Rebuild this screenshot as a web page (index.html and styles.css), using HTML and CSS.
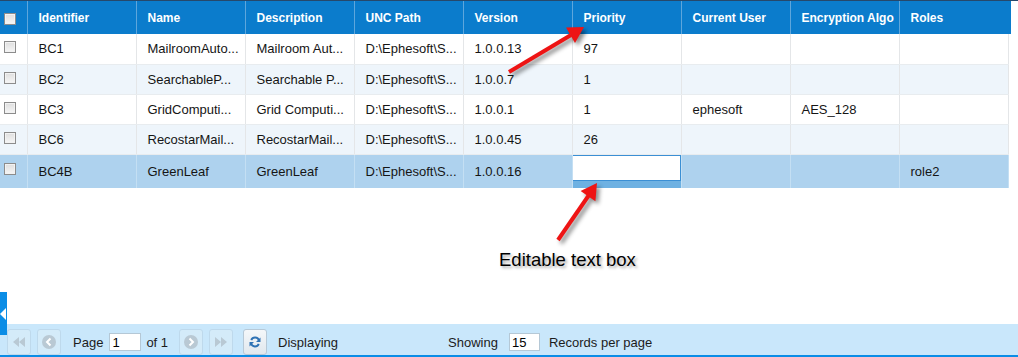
FILE: index.html
```
<!DOCTYPE html>
<html lang="en">

<head>
    <meta charset="UTF-8">
    <title>Batch Class Management</title>
    <link rel="stylesheet" href="styles.css">
</head>

<body>
    <div class="page">
        <div class="top-line"></div>

        <!-- Grid header -->
        <div class="grid-head">
            <table class="grid">
                <colgroup>
                    <col class="col-check"><col><col><col><col><col><col><col><col><col>
                </colgroup>
                <tr>
                    <th class="check-cell"><span class="checkbox"></span></th>
                    <th>Identifier</th>
                    <th>Name</th>
                    <th>Description</th>
                    <th>UNC Path</th>
                    <th>Version</th>
                    <th>Priority</th>
                    <th>Current User</th>
                    <th>Encryption Algo</th>
                    <th>Roles</th>
                </tr>
            </table>
        </div>

        <table class="grid grid-body">
            <colgroup>
                <col class="col-check"><col><col><col><col><col><col><col><col><col>
            </colgroup>
            <tr>
                <td class="check-cell"><span class="checkbox"></span></td>
                <td>BC1</td>
                <td>MailroomAuto...</td>
                <td>Mailroom Aut...</td>
                <td>D:\Ephesoft\S...</td>
                <td>1.0.0.13</td>
                <td>97</td>
                <td></td>
                <td></td>
                <td></td>
            </tr>
            <tr class="alt">
                <td class="check-cell"><span class="checkbox"></span></td>
                <td>BC2</td>
                <td>SearchableP...</td>
                <td>Searchable P...</td>
                <td>D:\Ephesoft\S...</td>
                <td>1.0.0.7</td>
                <td>1</td>
                <td></td>
                <td></td>
                <td></td>
            </tr>
            <tr>
                <td class="check-cell"><span class="checkbox"></span></td>
                <td>BC3</td>
                <td>GridComputi...</td>
                <td>Grid Computi...</td>
                <td>D:\Ephesoft\S...</td>
                <td>1.0.0.1</td>
                <td>1</td>
                <td>ephesoft</td>
                <td>AES_128</td>
                <td></td>
            </tr>
            <tr class="alt">
                <td class="check-cell"><span class="checkbox"></span></td>
                <td>BC6</td>
                <td>RecostarMail...</td>
                <td>RecostarMail...</td>
                <td>D:\Ephesoft\S...</td>
                <td>1.0.0.45</td>
                <td>26</td>
                <td></td>
                <td></td>
                <td></td>
            </tr>
            <tr class="selected">
                <td class="check-cell"><span class="checkbox"></span></td>
                <td>BC4B</td>
                <td>GreenLeaf</td>
                <td>GreenLeaf</td>
                <td>D:\Ephesoft\S...</td>
                <td>1.0.0.16</td>
                <td class="edit-cell"><input type="text" class="cell-editor"></td>
                <td></td>
                <td></td>
                <td>role2</td>
            </tr>
        </table>

        <div class="spacer"></div>

        <!-- Pager -->
        <div class="pager">
            <button class="pager-btn first" disabled>
                <svg width="12" height="10" viewBox="0 0 12 10"><path d="M6 0 L0 5 L6 10 Z M12 0 L6 5 L12 10 Z" fill="#b9c9d4"/></svg>
            </button>
            <button class="pager-btn prev" disabled>
                <svg width="14" height="14" viewBox="0 0 14 14"><circle cx="7" cy="7" r="7" fill="#b9c9d4"/><path d="M8.5 3.5 L5 7 L8.5 10.5" stroke="#fff" stroke-width="2" fill="none"/></svg>
            </button>
            <span class="pager-label page-label">Page</span>
            <input type="text" class="pager-input page-input" value="1">
            <span class="pager-label of-label">of 1</span>
            <button class="pager-btn next" disabled>
                <svg width="14" height="14" viewBox="0 0 14 14"><circle cx="7" cy="7" r="7" fill="#b9c9d4"/><path d="M5.5 3.5 L9 7 L5.5 10.5" stroke="#fff" stroke-width="2" fill="none"/></svg>
            </button>
            <button class="pager-btn last" disabled>
                <svg width="12" height="10" viewBox="0 0 12 10"><path d="M0 0 L6 5 L0 10 Z M6 0 L12 5 L6 10 Z" fill="#b9c9d4"/></svg>
            </button>
            <button class="pager-btn refresh">
                <svg width="12" height="12" viewBox="0 0 12 12">
                    <path d="M10 4.5 A4.2 4.2 0 0 0 2.2 4" stroke="#2f73b5" stroke-width="2" fill="none"/>
                    <path d="M11.5 1.5 L11.5 6 L7 6 Z" fill="#2f73b5"/>
                    <path d="M2 7.5 A4.2 4.2 0 0 0 9.8 8" stroke="#2f73b5" stroke-width="2" fill="none"/>
                    <path d="M0.5 10.5 L0.5 6 L5 6 Z" fill="#2f73b5"/>
                </svg>
            </button>
            <span class="pager-label display-label">Displaying</span>
            <span class="pager-label showing-label">Showing</span>
            <input type="text" class="pager-input size-input" value="15">
            <span class="pager-label records-label">Records per page</span>
        </div>

        <!-- Collapse tab on the left edge -->
        <div class="side-tab">
            <svg width="6" height="12" viewBox="0 0 6 12"><path d="M6 0 L0 6 L6 12 Z" fill="#fff"/></svg>
        </div>

        <!-- Annotation arrows -->
        <svg class="annotations" width="1018" height="357" viewBox="0 0 1018 357">
            <g class="arrow">
                <line x1="509" y1="72" x2="571" y2="35" stroke="#ee1414" stroke-width="4"/>
                <polygon points="584,27 575,43 566,27.5" fill="#ee1414"/>
            </g>
            <g class="arrow">
                <line x1="558" y1="240" x2="589" y2="195" stroke="#ee1414" stroke-width="4"/>
                <polygon points="597,183 595.4,201.3 580.6,191.1" fill="#ee1414"/>
            </g>
        </svg>
        <div class="note">Editable text box</div>
    </div>
</body>

</html>
```

FILE: styles.css
```
/* General Reset */
* {
    margin: 0;
    padding: 0;
    box-sizing: border-box;
}

body {
    font-family: 'Liberation Sans', Arial, sans-serif;
    background: #ffffff;
    color: #222;
}

.page {
    position: relative;
    width: 1018px;
    height: 357px;
    overflow: hidden;
}

.top-line {
    height: 1px;
    background: #26486b;
}

/* Grid */
.grid-head {
    width: 1011px;
    background: #0b7ccc;
}

.grid {
    width: 1008px;
    table-layout: fixed;
    border-collapse: collapse;
}

.grid col {
    width: 109px;
}

.grid col.col-check {
    width: 27px;
}

.grid th {
    height: 33px;
    padding: 0 11px;
    text-align: left;
    font-size: 12px;
    font-weight: bold;
    color: #ffffff;
    border-left: 1px solid #5ea6dc;
    white-space: nowrap;
    overflow: hidden;
}

.grid th:first-child {
    border-left: none;
}

.grid td {
    height: 30px;
    padding: 0 2px 0 11px;
    font-size: 13px;
    color: #151515;
    border-left: 1px solid #e4e6e8;
    border-right: 1px solid #e4e6e8;
    border-bottom: 1px solid #e8ecef;
    white-space: nowrap;
    overflow: hidden;
}

.grid td:first-child {
    border-left: none;
}

.grid .check-cell {
    padding: 7px 0 0 4px;
    vertical-align: top;
}

.grid th.check-cell {
    padding-top: 2px;
    vertical-align: middle;
}

.checkbox {
    display: block;
    width: 12px;
    height: 12px;
    border: 1px solid #8c8c8c;
    background: linear-gradient(#dedede, #f6f6f6);
    box-shadow: inset 0 0 0 1px #f2f2f2;
}

.grid-body tr.alt td {
    background: #eef5fb;
}

.grid-body tr.selected td {
    background: #aed2ee;
    height: 34px;
    border-color: #c4dff3;
    border-bottom: none;
}

.grid-body tr.selected td.check-cell {
    padding-top: 8px;
}

.grid-body tr.selected td.edit-cell {
    background: #6eb1e2;
    padding: 0;
    vertical-align: top;
}

.cell-editor {
    display: block;
    width: 109px;
    height: 26px;
    margin-left: -1px;
    border: 1px solid #3b8fd4;
    background: #ffffff;
    font-family: inherit;
    font-size: 13px;
    outline: none;
}

.spacer {
    height: 136px;
}

/* Pager */
.pager {
    display: flex;
    align-items: center;
    height: 34px;
    padding-top: 5px;
    background: #c9e7fb;
    border-bottom: 3px solid #0b8de6;
    font-size: 13px;
    color: #1c1c1c;
}

.pager-btn {
    width: 24px;
    height: 26px;
    border: 1px solid #bed9ec;
    border-radius: 3px;
    background: #d4ebf9;
    display: flex;
    align-items: center;
    justify-content: center;
    align-self: flex-start;
}

.pager-btn.first {
    margin-left: 7px;
}

.pager-btn.prev,
.pager-btn.last {
    margin-left: 6px;
}

.pager-btn.next {
    margin-left: 11px;
}

.pager-btn.refresh {
    margin-left: 10px;
    background: linear-gradient(#f4f7fa, #e1e8ee);
    border-color: #b7c9d7;
}

.pager-label {
    white-space: nowrap;
}

.page-label {
    margin-left: 12px;
}

.of-label {
    margin-left: 5px;
}

.display-label {
    margin-left: 11px;
}

.showing-label {
    margin-left: 110px;
}

.records-label {
    margin-left: 9px;
}

.pager-input {
    height: 18px;
    border: 1px solid #b5c8d6;
    background: #ffffff;
    font-family: inherit;
    font-size: 13px;
    padding: 0 2px;
    color: #000;
}

.page-input {
    width: 32px;
    margin-left: 6px;
}

.size-input {
    width: 31px;
    margin-left: 11px;
}

/* Left edge tab */
.side-tab {
    position: absolute;
    left: 0;
    top: 292px;
    width: 7px;
    height: 43px;
    background: #0b8de6;
    display: flex;
    align-items: center;
}

/* Annotations */
.annotations {
    position: absolute;
    left: 0;
    top: 0;
    pointer-events: none;
}

.arrow {
    filter: drop-shadow(3px 3px 2px rgba(0, 0, 0, 0.45));
}

.note {
    position: absolute;
    left: 499px;
    top: 249px;
    font-size: 18.5px;
    color: #000;
    text-shadow: 2px 2px 3px rgba(0, 0, 0, 0.35);
}
```
